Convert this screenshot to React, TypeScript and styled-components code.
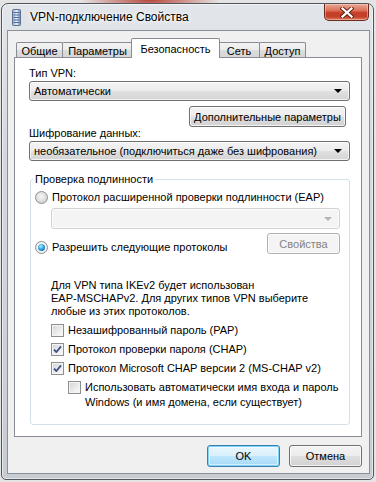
import * as React from 'react';
import styled, { createGlobalStyle } from 'styled-components';

const GlobalStyle = createGlobalStyle`
  html, body {
    margin: 0;
    padding: 0;
  }
  body {
    width: 376px;
    height: 482px;
    overflow: hidden;
    background: radial-gradient(ellipse 70px 14px at 150px 0px, #b8473a 0%, rgba(184, 71, 58, 0) 100%), #e4e4e4;
    font-family: "Liberation Sans", Arial, sans-serif;
    font-size: 11px;
    color: #000;
  }
`;

/**
 * Outer glass frame of the dialog window.
 */
const Window = styled.div`
  box-sizing: border-box;
  margin: 3px 2px 0 1px;
  height: 477px;
  border: 1px solid #50565c;
  border-radius: 7px 7px 5px 5px;
  background: linear-gradient(180deg, #e2e6ea 0%, #d3d9de 30%, #c6ccd2 100%);
  box-shadow: inset 0 0 0 1px rgba(255, 255, 255, 0.55);
  padding: 0 3px 5px 5px;
  display: flex;
  flex-direction: column;
`;

const TitleBar = styled.div`
  height: 26px;
  display: flex;
  align-items: center;
  flex: none;
`;

const TitleIcon = styled.svg`
  margin-left: 5px;
  margin-right: 9px;
  flex: none;
`;

const TitleText = styled.span`
  font-size: 12px;
  color: #000;
  text-shadow: 0 0 6px #fff, 0 0 3px #fff;
`;

const CloseButton = styled.div`
  margin-left: auto;
  margin-right: 1px;
  align-self: flex-start;
  box-sizing: border-box;
  width: 45px;
  height: 17px;
  border: 1px solid #6a2a20;
  border-top: none;
  border-radius: 0 0 5px 5px;
  background: linear-gradient(180deg, #eaa898 0%, #dc735a 40%, #c43d25 55%, #c5412a 80%, #de7c62 100%);
  box-shadow: inset 0 0 0 1px rgba(255, 220, 210, 0.45);
  display: flex;
  align-items: center;
  justify-content: center;
`;

/**
 * Grey client area of the window.
 */
const Client = styled.div`
  flex: 1;
  display: flex;
  flex-direction: column;
  box-sizing: border-box;
  border: 1px solid #8a9097;
  background: #f0f0f0;
  padding: 7px 7px 6px 6px;
`;

const TabRow = styled.div`
  display: flex;
  align-items: flex-end;
  height: 20px;
  padding-left: 2px;
  margin-bottom: -1px;
  position: relative;
  z-index: 1;
`;

const Tab = styled.div<{ $w: number; $active?: boolean; $ml?: number }>`
  box-sizing: border-box;
  width: ${(p) => p.$w}px;
  margin-left: ${(p) => p.$ml ?? 0}px;
  height: ${(p) => (p.$active ? 20 : 15)}px;
  margin-bottom: ${(p) => (p.$active ? 0 : 1)}px;
  border: 1px solid #898c95;
  border-bottom: none;
  border-radius: 2px 2px 0 0;
  background: ${(p) =>
    p.$active ? '#fff' : 'linear-gradient(180deg, #f3f3f3 0%, #ebebeb 50%, #dddddd 51%, #d6d6d6 100%)'};
  display: flex;
  align-items: center;
  justify-content: center;
  padding-top: ${(p) => (p.$active ? 0 : 1)}px;
  position: relative;
  z-index: ${(p) => (p.$active ? 2 : 1)};
  white-space: nowrap;
`;

/**
 * White tab page.
 */
const Panel = styled.div`
  flex: 1;
  display: flex;
  flex-direction: column;
  box-sizing: border-box;
  border: 1px solid #898c95;
  background: #fff;
  padding: 8px 12px 11px 14px;
`;

const Label = styled.div<{ $mt?: number }>`
  line-height: 14px;
  margin-top: ${(p) => p.$mt ?? 0}px;
`;

const Combo = styled.div<{ $disabled?: boolean; $ml?: number; $mr?: number; $mt?: number; $h?: number }>`
  box-sizing: border-box;
  height: ${(p) => p.$h ?? 20}px;
  margin: ${(p) => p.$mt ?? 1}px ${(p) => p.$mr ?? 0}px 0 ${(p) => p.$ml ?? 0}px;
  border: 1px solid ${(p) => (p.$disabled ? '#d2d2d2' : '#707070')};
  border-radius: 3px;
  background: ${(p) =>
    p.$disabled
      ? '#f4f4f4'
      : 'linear-gradient(180deg, #f4f4f4 0%, #ececec 48%, #e0e0e0 52%, #d4d4d4 100%)'};
  box-shadow: inset 0 0 0 1px rgba(255, 255, 255, 0.7);
  display: flex;
  align-items: center;
  padding: 0 7px 0 4px;
  white-space: nowrap;
`;

const ComboText = styled.span`
  flex: 1;
`;

const Arrow = styled.span<{ $disabled?: boolean }>`
  width: 0;
  height: 0;
  border-left: 4px solid transparent;
  border-right: 4px solid transparent;
  border-top: 4px solid ${(p) => (p.$disabled ? '#b5b5b5' : '#000')};
  flex: none;
`;

const Button = styled.div<{ $w: number; $h?: number; $disabled?: boolean; $default?: boolean; $push?: boolean }>`
  box-sizing: border-box;
  width: ${(p) => p.$w}px;
  height: ${(p) => p.$h ?? 21}px;
  margin-left: ${(p) => (p.$push ? 'auto' : '0')};
  border: 1px solid ${(p) => (p.$default ? '#3c7fb1' : p.$disabled ? '#adb2b5' : '#707070')};
  border-radius: 3px;
  background: ${(p) =>
    p.$default
      ? 'linear-gradient(180deg, #eaf6fd 0%, #d9f0fc 48%, #bee6fd 52%, #a7d9f5 100%)'
      : p.$disabled
      ? '#f4f4f4'
      : 'linear-gradient(180deg, #f4f4f4 0%, #ececec 48%, #dedede 52%, #d2d2d2 100%)'};
  box-shadow: ${(p) =>
    p.$default ? 'inset 0 0 0 1px #7fd3f7, inset 0 0 0 2px rgba(255,255,255,0.5)' : 'inset 0 0 0 1px rgba(255,255,255,0.75)'};
  color: ${(p) => (p.$disabled ? '#838383' : '#000')};
  display: flex;
  align-items: center;
  justify-content: center;
  white-space: nowrap;
  flex: none;
`;

const RightRow = styled.div`
  display: flex;
  justify-content: flex-end;
  margin: 5px 3px 0 0;
`;

const GroupBox = styled.fieldset`
  flex: 1;
  margin: 11px -1px 0 1px;
  padding: 0 0 0 4px;
  border: 1px solid #d5dfe5;
  border-radius: 3px;
  box-shadow: inset 0 0 0 1px #fff;
  min-width: 0;
`;

const Legend = styled.legend`
  padding: 0 2px;
  line-height: 14px;
  margin-left: -2px;
`;

const OptionRow = styled.div<{ $mt?: number; $ml?: number; $mr?: number }>`
  display: flex;
  align-items: flex-start;
  gap: 4px;
  margin-top: ${(p) => p.$mt ?? 0}px;
  margin-left: ${(p) => p.$ml ?? 0}px;
  margin-right: ${(p) => p.$mr ?? 0}px;
  line-height: 14px;
`;

const Radio = styled.span<{ $on?: boolean }>`
  box-sizing: border-box;
  width: 13px;
  height: 13px;
  margin-top: 1px;
  border-radius: 50%;
  border: 1px solid #8e8f8f;
  background: ${(p) =>
    p.$on
      ? 'radial-gradient(circle at 50% 50%, #fff 0%, #f4f4f4 60%, #d8d8d8 100%)'
      : 'radial-gradient(circle at 45% 40%, #f6f6f6 0%, #dadada 60%, #c6c6c6 100%)'};
  display: inline-flex;
  align-items: center;
  justify-content: center;
  flex: none;

  &::after {
    content: '';
    display: ${(p) => (p.$on ? 'block' : 'none')};
    width: 7px;
    height: 7px;
    border-radius: 50%;
    background: radial-gradient(circle at 40% 35%, #b9ecff 0%, #2ea8e6 45%, #0d4a84 100%);
  }
`;

const CheckBox = styled.span`
  box-sizing: border-box;
  width: 13px;
  height: 13px;
  margin-top: 1px;
  border: 1px solid #8e8f8f;
  background: linear-gradient(135deg, #d3d3d3 0%, #e9e9e9 50%, #fbfbfb 100%);
  box-shadow: inset 0 0 0 1px #f4f4f4;
  display: inline-flex;
  align-items: center;
  justify-content: center;
  flex: none;
`;

const TwoLines = styled.span`
  line-height: 15px;
`;

const Note = styled.div`
  margin: 25px 0 0 16px;
  line-height: 13px;
`;

const Footer = styled.div`
  display: flex;
  justify-content: flex-end;
  gap: 9px;
  margin-top: 8px;
`;

function Check({ on }: { on?: boolean }) {
  return (
    <CheckBox>
      {on && (
        <svg width="11" height="11" viewBox="0 0 11 11">
          <path d="M2 5.6 L4.4 8 L9 2.4" fill="none" stroke="#3d5188" strokeWidth="1.8" strokeLinejoin="round" />
        </svg>
      )}
    </CheckBox>
  );
}

/**
 * VPN connection properties dialog, security tab.
 */
function App() {
    return (
        <>
            <GlobalStyle />
            <Window>
                <TitleBar>
                    <TitleIcon width="9" height="17" viewBox="0 0 9 17">
                        <defs>
                            <linearGradient id="ic" x1="0" y1="0" x2="1" y2="0">
                                <stop offset="0" stopColor="#8ea5c4" />
                                <stop offset="0.5" stopColor="#e8f0fa" />
                                <stop offset="1" stopColor="#6f88ad" />
                            </linearGradient>
                        </defs>
                        <rect x="0.5" y="0.5" width="8" height="16" rx="1" fill="url(#ic)" stroke="#5d6f8c" />
                        {[3, 5.5, 8, 10.5, 13].map((y) => (
                            <rect key={y} x="1.5" y={y} width="6" height="1" fill="#4c6da3" />
                        ))}
                    </TitleIcon>
                    <TitleText>VPN-подключение Свойства</TitleText>
                    <CloseButton>
                        <svg width="14" height="11" viewBox="0 0 14 11">
                            <path d="M2.5 1.5 L11.5 9.5 M11.5 1.5 L2.5 9.5" stroke="#5a1e14" strokeWidth="4" strokeLinecap="square" />
                            <path d="M2.5 1.5 L11.5 9.5 M11.5 1.5 L2.5 9.5" stroke="#fff" strokeWidth="2.3" strokeLinecap="square" />
                        </svg>
                    </CloseButton>
                </TitleBar>
                <Client>
                    <TabRow>
                        <Tab $w={47}>Общие</Tab>
                        <Tab $w={71} $ml={-1}>Параметры</Tab>
                        <Tab $w={89} $ml={-2} $active>Безопасность</Tab>
                        <Tab $w={42} $ml={-2}>Сеть</Tab>
                        <Tab $w={47} $ml={-1}>Доступ</Tab>
                    </TabRow>
                    <Panel>
                        <Label>Тип VPN:</Label>
                        <Combo $mr={-1}>
                            <ComboText>Автоматически</ComboText>
                            <Arrow />
                        </Combo>
                        <RightRow>
                            <Button $w={157}>Дополнительные параметры</Button>
                        </RightRow>
                        <Label $mt={-1}>Шифрование данных:</Label>
                        <Combo $mr={-1}>
                            <ComboText>необязательное (подключиться даже без шифрования)</ComboText>
                            <Arrow />
                        </Combo>
                        <GroupBox>
                            <Legend>Проверка подлинности</Legend>
                            <OptionRow $mt={4}>
                                <Radio />
                                <span>Протокол расширенной проверки подлинности (EAP)</span>
                            </OptionRow>
                            <Combo $disabled $ml={16} $mr={9} $mt={4} $h={21}>
                                <ComboText />
                                <Arrow $disabled />
                            </Combo>
                            <OptionRow $mt={4} $mr={9}>
                                <OptionRow $mt={7}>
                                    <Radio $on />
                                    <span>Разрешить следующие протоколы</span>
                                </OptionRow>
                                <Button $w={73} $disabled $push>Свойства</Button>
                            </OptionRow>
                            <Note>
                                Для VPN типа IKEv2 будет использован<br />
                                EAP-MSCHAPv2. Для других типов VPN выберите<br />
                                любые из этих протоколов.
                            </Note>
                            <OptionRow $mt={5} $ml={16}>
                                <Check />
                                <span>Незашифрованный пароль (PAP)</span>
                            </OptionRow>
                            <OptionRow $mt={5} $ml={16}>
                                <Check on />
                                <span>Протокол проверки пароля (CHAP)</span>
                            </OptionRow>
                            <OptionRow $mt={5} $ml={16}>
                                <Check on />
                                <span>Протокол Microsoft CHAP версии 2 (MS-CHAP v2)</span>
                            </OptionRow>
                            <OptionRow $mt={5} $ml={33}>
                                <Check />
                                <TwoLines>
                                    Использовать автоматически имя входа и пароль<br />
                                    Windows (и имя домена, если существует)
                                </TwoLines>
                            </OptionRow>
                        </GroupBox>
                    </Panel>
                    <Footer>
                        <Button $w={73} $h={22} $default>OK</Button>
                        <Button $w={73} $h={22}>Отмена</Button>
                    </Footer>
                </Client>
            </Window>
        </>
    );
}

export default App;
